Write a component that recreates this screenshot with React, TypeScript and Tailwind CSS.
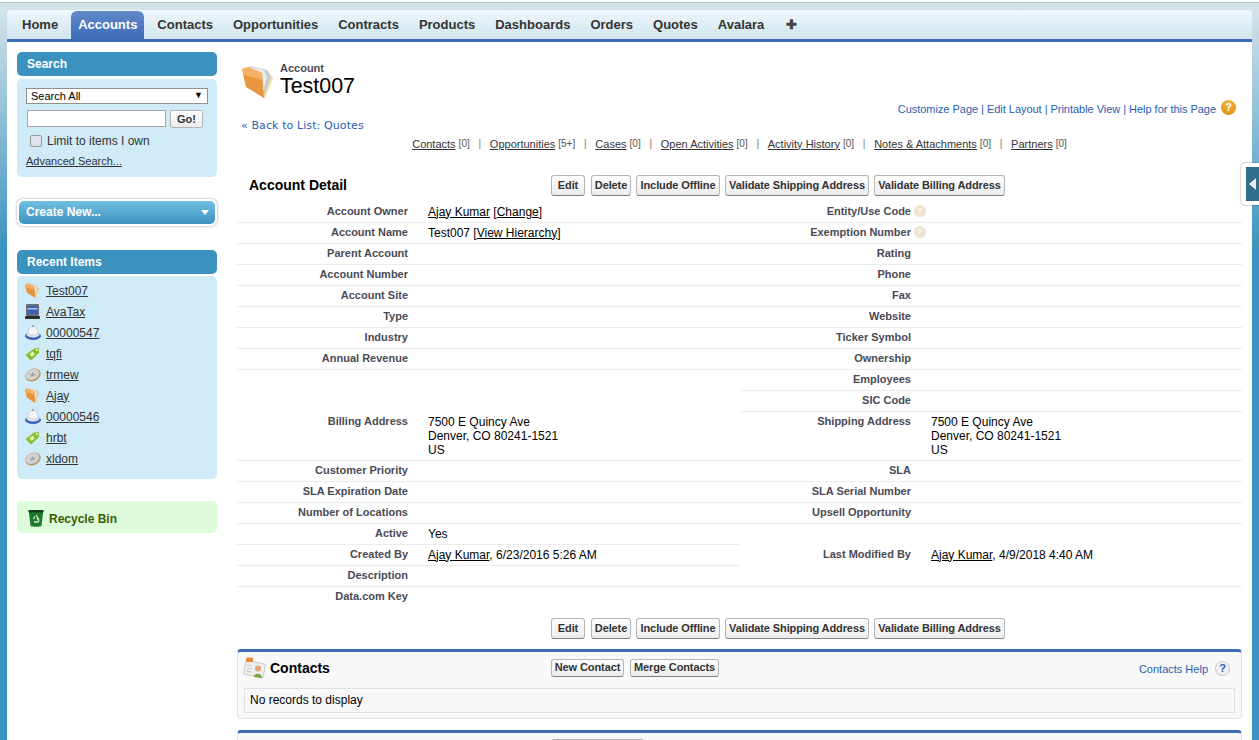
import type { ReactNode } from "react";

const tabs = ["Home", "Accounts", "Contacts", "Opportunities", "Contracts", "Products", "Dashboards", "Orders", "Quotes", "Avalara"];

const related = [
  ["Contacts", "[0]"],
  ["Opportunities", "[5+]"],
  ["Cases", "[0]"],
  ["Open Activities", "[0]"],
  ["Activity History", "[0]"],
  ["Notes & Attachments", "[0]"],
  ["Partners", "[0]"],
];

const recent: [string, string][] = [
  ["folder", "Test007"],
  ["screen", "AvaTax"],
  ["bell", "00000547"],
  ["tag", "tqfi"],
  ["coin", "trmew"],
  ["folder", "Ajay"],
  ["bell", "00000546"],
  ["tag", "hrbt"],
  ["coin", "xldom"],
];

function Folder({ size }: { size: number }) {
  return (
    <svg width={size} height={size} viewBox="0 0 32 32" className="shrink-0">
      <path d="M8 1 L26 5 L31 12 L23 32 L21 32 Z" fill="#f1dc9c" />
      <path d="M7 0 L25 4 L29 11 L22 29 L8 20 Z" fill="#c7cacf" />
      <path d="M8 1 L22 4 L25 11 L21 26 Z" fill="#e7e9ec" />
      <path d="M0 3 L6 1 L20 7 L22 32 L4 21 Z" fill="#e8953f" />
      <path d="M0 3 L6 1 L20 7 L20.500 14 L2 9 Z" fill="#f3b266" />
    </svg>
  );
}

function Screen() {
  return (
    <svg width="15" height="15" viewBox="0 0 15 15" className="shrink-0">
      <rect x="1" y="0" width="13" height="12" rx="1" fill="#66707c" />
      <rect x="2.5" y="2" width="10" height="8" fill="#3f62b5" />
      <rect x="2.5" y="4" width="10" height="1.5" fill="#a9c3ea" />
      <rect x="0" y="12" width="15" height="3" rx="1" fill="#2c2f33" />
    </svg>
  );
}

function Bell() {
  return (
    <svg width="16" height="15" viewBox="0 0 16 15" className="shrink-0">
      <ellipse cx="8" cy="11" rx="8" ry="4" fill="#3f62b5" />
      <ellipse cx="8" cy="9.5" rx="6.5" ry="3" fill="#dfe6f2" />
      <path d="M3 9 C3 3 5.500 1.500 8 1.500 C10.500 1.500 13 3 13 9 C11 10.500 5 10.500 3 9 Z" fill="#f4f5f7" stroke="#b8bcc4" strokeWidth="0.6" />
      <circle cx="8" cy="1.200" r="1.100" fill="#9aa0a8" />
    </svg>
  );
}

function Tag() {
  return (
    <svg width="16" height="15" viewBox="0 0 16 15" className="shrink-0">
      <path d="M0.500 9 L9 2.500 L14 2 L14 7 L6 14.500 Z" fill="#86bf2c" />
      <rect x="5" y="6.500" width="4" height="3.500" fill="#e4f3c3" transform="rotate(-40 7 8)" />
      <circle cx="12" cy="4" r="1" fill="#ffffff" />
      <path d="M12 4 L15.500 0.500" stroke="#b9bcb4" strokeWidth="0.7" />
    </svg>
  );
}

function Coin() {
  return (
    <svg width="16" height="15" viewBox="0 0 16 15" className="shrink-0">
      <ellipse cx="8" cy="8" rx="8" ry="6" transform="rotate(-25 8 8)" fill="#b89b6c" />
      <ellipse cx="7.500" cy="7.500" rx="7" ry="5" transform="rotate(-25 7.500 7.500)" fill="#d2d3d3" />
      <path d="M7.500 4.500 L9 7 L11 7.500 L8.500 9 L5 10 L6 8 L4.500 7 L7 6.800 Z" fill="#a4a6a8" />
    </svg>
  );
}

function RecentIcon({ kind }: { kind: string }) {
  if (kind === "folder") return <Folder size={15} />;
  if (kind === "screen") return <Screen />;
  if (kind === "bell") return <Bell />;
  if (kind === "tag") return <Tag />;
  return <Coin />;
}

function RecycleBin() {
  return (
    <svg width="16" height="18" viewBox="0 0 16 18" className="mt-[2px] shrink-0">
      <path d="M0.500 1 L15.500 1 L15 4 L13.500 17 C11 18 5 18 2.500 17 L1 4 Z" fill="#1d7a2b" />
      <rect x="0.500" y="1" width="15" height="2.500" rx="1" fill="#103d18" />
      <path d="M8 6 L10.500 10 L8.800 10 M5.500 10 L7 7.500 M6 13 L10 13 L11 11" stroke="#d7efd7" strokeWidth="1.300" fill="none" />
    </svg>
  );
}

function ContactCard() {
  return (
    <svg width="24" height="24" viewBox="0 0 24 24" className="shrink-0">
      <rect x="1.500" y="5" width="20" height="14" fill="#eef0ee" stroke="#bfc3c4" strokeWidth="0.8" transform="rotate(12 11 12)" />
      <rect x="3" y="0.500" width="7" height="4.500" rx="1" fill="#e8893a" />
      <path d="M4 8 L9 9 M4 11 L9 12 M3 14 L8 15" stroke="#b7bbbd" strokeWidth="0.8" />
      <circle cx="15" cy="11.500" r="3" fill="#e2a574" />
      <path d="M11 20 C11 15.500 19 15.500 19 21 Z" fill="#6ea83d" />
    </svg>
  );
}

function HelpDot({ className }: { className: string }) {
  return (
    <span className={"inline-flex shrink-0 items-center justify-center rounded-full font-bold " + className}>?</span>
  );
}

function Btn({ w, children }: { w: string; children: ReactNode }) {
  return (
    <button className={"h-[21px] shrink-0 rounded-[3px] border border-[#b5b5b5] border-b-[#7f7f7f] bg-gradient-to-b from-[#fefefe] to-[#ececec] text-center text-[11px] font-bold leading-[18px] tracking-[-0.1px] text-[#333] " + w}>
      {children}
    </button>
  );
}

function ActionButtons() {
  return (
    <div className="flex gap-[5px]">
      <Btn w="w-[34px] mr-[1px]">Edit</Btn>
      <Btn w="w-[40px]">Delete</Btn>
      <Btn w="w-[84px]">Include Offline</Btn>
      <Btn w="w-[144px]">Validate Shipping Address</Btn>
      <Btn w="w-[131px]">Validate Billing Address</Btn>
    </div>
  );
}

function Row({ label, children, className = "h-[21px]", pt = "pt-[2px]", border = true, hint = false }: {
  label?: string;
  children?: ReactNode;
  className?: string;
  pt?: string;
  border?: boolean;
  hint?: boolean;
}) {
  return (
    <div className={"flex " + className + " " + pt + (border ? " border-b border-[#ececec]" : "")}>
      <div className="relative w-[171px] shrink-0 text-right text-[11px] font-bold leading-[14px] text-[#4a4a56]">
        {label}
        {hint && (
          <HelpDot className="absolute right-[-15px] top-[1px] h-[12px] w-[12px] bg-[#efe2cf] text-[8px] leading-none text-white" />
        )}
      </div>
      <div className="ml-[20px] pt-[1px] text-[12px] leading-[14px] text-black">{children}</div>
    </div>
  );
}

function Owner({ date }: { date: string }) {
  return (
    <>
      <span className="underline">Ajay Kumar</span>, {date}
    </>
  );
}

function Address() {
  return (
    <>
      7500 E Quincy Ave
      <br />
      Denver, CO 80241-1521
      <br />
      US
    </>
  );
}

function SideHeader({ children }: { children: ReactNode }) {
  return (
    <div className="flex h-[24px] items-center rounded-[5px] bg-[#3c92bf] pl-[10px] text-[12px] font-bold text-white">
      {children}
    </div>
  );
}

export default function App() {
  return (
    <div className="h-[740px] w-full overflow-hidden bg-[linear-gradient(to_bottom,#d3e3ea_10px,#3a93bf_250px)] font-['Liberation_Sans',Arial,sans-serif]">
      <div className="h-[2px] bg-white" />
      <div className="h-[1px] bg-[#bcc2c5]" />
      <div className="relative mx-[7px] mt-[7px] h-[730px] rounded-t-[4px] bg-white">
        {/* tab bar */}
        <div className="flex h-[29px] items-end rounded-t-[4px] bg-gradient-to-b from-[#eff7fb] to-[#cfe4ee] pl-[5px]">
          {tabs.map((t) =>
            t === "Accounts" ? (
              <div key={t} className="mx-[3px] flex h-[28px] items-center rounded-t-[6px] bg-gradient-to-b from-[#6289c9] to-[#3d6bb8] px-[7px] text-[13px] font-bold text-white">
                {t}
              </div>
            ) : (
              <div key={t} className="mx-[3px] flex h-[28px] items-center px-[7px] text-[13px] font-bold text-[#333]">
                {t}
              </div>
            )
          )}
          <div className="ml-[12px] flex h-[28px] items-center text-[13px] font-bold text-[#444]">✚</div>
        </div>
        <div className="h-[3px] bg-[#3d6bb8]" />

        <div className="flex">
          {/* sidebar */}
          <div className="ml-[10px] w-[200px] shrink-0 pt-[10px]">
            <SideHeader>Search</SideHeader>
            <div className="mt-[3px] h-[98px] rounded-[5px] bg-[#cfebf7] pl-[9px] pt-[9px]">
              <div className="flex h-[16px] w-[182px] items-center justify-between border border-[#8f8f8f] bg-white px-[4px] text-[11px] text-black">
                Search All
                <span className="text-[9px]">▼</span>
              </div>
              <div className="mt-[6px] flex items-start">
                <div className="ml-[1px] h-[17px] w-[139px] border border-[#a5a5a5] bg-white" />
                <button className="ml-[4px] h-[18px] w-[33px] rounded-[2px] border border-[#b5b5b5] bg-gradient-to-b from-[#fefefe] to-[#ececec] text-[11px] font-bold leading-none text-[#333]">
                  Go!
                </button>
              </div>
              <div className="mt-[4px] flex items-center pl-[4px] text-[12px] text-[#333]">
                <span className="h-[12px] w-[12px] rounded-[2px] border border-[#9a9a9a] bg-[#e0e4e8]" />
                <span className="ml-[5px]">Limit to items I own</span>
              </div>
              <div className="mt-[4px] text-[11px] leading-[14px] text-[#333] underline">Advanced Search...</div>
            </div>

            <div className="mt-[22px] rounded-[6px] bg-white p-[2px] shadow-[0_0_3px_rgba(0,0,0,0.4)]">
              <div className="flex h-[23px] items-center justify-between rounded-[5px] bg-gradient-to-b from-[#72bfe1] to-[#3a92c0] pb-[1px] pl-[7px] pr-[6px] text-[12px] font-bold text-white">
                Create New...
                <span className="h-0 w-0 border-x-[4px] border-t-[5px] border-x-transparent border-t-white" />
              </div>
            </div>

            <div className="mt-[24px]">
              <SideHeader>Recent Items</SideHeader>
            </div>
            <div className="mt-[2px] h-[203px] rounded-[5px] bg-[#cfebf7] pl-[8px] pt-[4px]">
              {recent.map(([kind, name]) => (
                <div key={name} className="flex h-[21px] items-center">
                  <div className="flex w-[21px] shrink-0"><RecentIcon kind={kind} /></div>
                  <span className="text-[12px] text-[#333] underline">{name}</span>
                </div>
              ))}
            </div>

            <div className="mt-[22px] flex h-[32px] items-center rounded-[5px] bg-[#defbdc] pl-[11px] text-[12px] font-bold text-[#3d5c00]">
              <RecycleBin />
              <span className="ml-[5px] pt-[4px]">Recycle Bin</span>
            </div>
          </div>

          {/* main column */}
          <div className="ml-[20px] w-[1005px] shrink-0">
            <div className="flex h-[58px] items-end pl-[5px]">
              <div className="mb-[2px]"><Folder size={32} /></div>
              <div className="ml-[6px] pb-[2px]">
                <div className="text-[11px] font-bold leading-[11px] text-[#4a4a56]">Account</div>
                <div className="text-[21.4px] leading-[24px] text-black">Test007</div>
              </div>
            </div>

            <div className="mt-[1px] flex items-center justify-end pr-[6px] text-[11px] tracking-[-0.03px] text-[#2a5db0]">
              <span>Customize Page | Edit Layout | Printable View | Help for this Page</span>
              <HelpDot className="-mt-[4px] ml-[5px] h-[15px] w-[15px] bg-[radial-gradient(circle_at_50%_30%,#f4b83c,#d68a0e)] text-[11px] text-white" />
            </div>

            <div className="mt-[1px] pl-[4px] font-['DejaVu_Sans',sans-serif] text-[11px] leading-[14px] tracking-[0.1px] text-[#2a5db0]">
              « Back to List: Quotes
            </div>

            <div className="mt-[4px] flex justify-center text-[11px] leading-[14px] text-[#333]">
              {related.map(([name, count], i) => (
                <div key={name} className="flex items-center">
                  {i > 0 && <span className="mx-[8.75px] text-[10px] text-[#777]">|</span>}
                  <span className="underline">{name}</span>
                  <span className="ml-[3px] text-[10px] text-[#555]">{count}</span>
                </div>
              ))}
            </div>

            <div className="mt-[24px] flex h-[21px] items-center">
              <div className="w-[314px] shrink-0 pl-[12px] text-[14px] font-bold text-black">Account Detail</div>
              <ActionButtons />
            </div>

            <div className="mt-[6px] grid grid-cols-[503px_502px]">
              <div>
                <Row label="Account Owner"><span className="underline">Ajay Kumar</span> [<span className="underline">Change</span>]</Row>
                <Row label="Account Name">Test007 [<span className="underline">View Hierarchy</span>]</Row>
                <Row label="Parent Account" />
                <Row label="Account Number" />
                <Row label="Account Site" />
                <Row label="Type" />
                <Row label="Industry" />
                <Row label="Annual Revenue" />
                <Row label="Billing Address" className="h-[91px]" pt="pt-[44px]"><Address /></Row>
                <Row label="Customer Priority" />
                <Row label="SLA Expiration Date" />
                <Row label="Number of Locations" />
                <Row label="Active">Yes</Row>
                <Row label="Created By"><Owner date="6/23/2016 5:26 AM" /></Row>
                <Row label="Description" />
                <Row label="Data.com Key" border={false} />
              </div>
              <div>
                <Row label="Entity/Use Code" hint />
                <Row label="Exemption Number" hint />
                <Row label="Rating" />
                <Row label="Phone" />
                <Row label="Fax" />
                <Row label="Website" />
                <Row label="Ticker Symbol" />
                <Row label="Ownership" />
                <Row label="Employees" />
                <Row label="SIC Code" />
                <Row label="Shipping Address" className="h-[49px]" pt="pt-[2px]"><Address /></Row>
                <Row label="SLA" />
                <Row label="SLA Serial Number" />
                <Row label="Upsell Opportunity" />
                <Row label="Last Modified By" className="h-[63px]" pt="pt-[23px]"><Owner date="4/9/2018 4:40 AM" /></Row>
              </div>
            </div>

            <div className="mt-[10px] pl-[314px]">
              <ActionButtons />
            </div>

            {/* contacts list */}
            <div className="mt-[10px] h-[70px] rounded-[4px] border border-t-[3px] border-[#e0e3e5] border-t-[#3d6bb8] bg-[#f8f8f8]">
              <div className="flex h-[36px] items-center">
                <div className="flex w-[313px] shrink-0 items-center pb-[2px] pl-[5px]">
                  <ContactCard />
                  <span className="ml-[3px] text-[14px] font-bold text-black">Contacts</span>
                </div>
                <div className="flex gap-[6px] pb-[4px]">
                  <button className="h-[18px] w-[73px] rounded-[3px] border border-[#b5b5b5] border-b-[#7f7f7f] bg-gradient-to-b from-[#fefefe] to-[#ececec] text-[11px] font-bold leading-none tracking-[-0.1px] text-[#333]">New Contact</button>
                  <button className="h-[18px] w-[89px] rounded-[3px] border border-[#b5b5b5] border-b-[#7f7f7f] bg-gradient-to-b from-[#fefefe] to-[#ececec] text-[11px] font-bold leading-none tracking-[-0.1px] text-[#333]">Merge Contacts</button>
                </div>
                <div className="ml-auto flex items-center pr-[11px] text-[11px] text-[#2a5db0]">
                  Contacts Help
                  <HelpDot className="-mt-[3px] ml-[7px] h-[15px] w-[15px] border border-[#c5cad0] bg-[#f0f1f3] text-[11px] text-[#2a5db0]" />
                </div>
              </div>
              <div className="mx-[6px] flex h-[25px] items-center border border-[#e0e3e5] pl-[5px] text-[12px] text-black">
                No records to display
              </div>
            </div>

            <div className="mt-[11px] h-[40px] rounded-[4px] border border-t-[3px] border-[#e0e3e5] border-t-[#3d6bb8] bg-[#f8f8f8] pl-[313px] pt-[6px]">
              <div className="h-[18px] w-[94px] rounded-[3px] border border-[#b5b5b5] bg-[#f4f4f4]" />
            </div>
          </div>
        </div>

        {/* sidebar collapse handle, sits over the page edge */}
        <div className="absolute right-[-7px] top-[153px] flex h-[42px] w-[18px] items-center justify-end rounded-l-[5px] bg-white shadow-[0_0_2px_rgba(0,0,0,0.5)]">
          <div className="flex h-[34px] w-[13px] items-center justify-center bg-[#2f6d8b]">
            <span className="h-0 w-0 border-y-[6px] border-r-[7px] border-y-transparent border-r-[#e8eef0]" />
          </div>
        </div>
      </div>
    </div>
  );
}
